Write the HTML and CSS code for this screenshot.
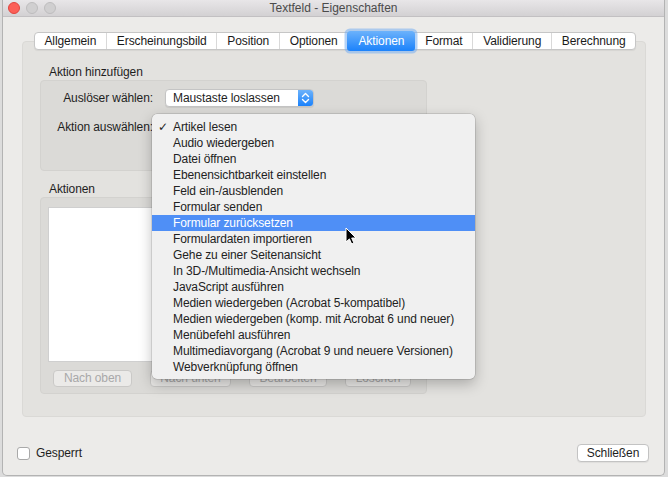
FILE: index.html
```html
<!DOCTYPE html>
<html lang="de">
<head>
<meta charset="utf-8">
<title>Textfeld - Eigenschaften</title>
<link rel="stylesheet" href="styles.css">
</head>
<body>
<div class="window">
  <div class="titlebar">
    <div class="lights"><span class="light red"></span><span class="light"></span><span class="light"></span></div>
    <div class="title">Textfeld - Eigenschaften</div>
    <div></div>
  </div>
  <div class="content">
    <div class="tabbar">
      <div class="tabs">
        <div class="tab">Allgemein</div>
        <div class="tab">Erscheinungsbild</div>
        <div class="tab">Position</div>
        <div class="tab">Optionen</div>
        <div class="tab selected">Aktionen</div>
        <div class="tab">Format</div>
        <div class="tab">Validierung</div>
        <div class="tab">Berechnung</div>
      </div>
    </div>
    <div class="panel">
      <div class="section-label">Aktion hinzufügen</div>
      <div class="group group-add">
        <div class="row">
          <div class="row-label">Auslöser wählen:</div>
          <div class="popup">
            <span class="popup-text">Maustaste loslassen</span>
            <span class="popup-arrows">
              <svg width="15" height="16" viewBox="0 0 15 16"><path d="M4.5 6.5 L7.5 3.5 L10.5 6.5 M4.5 9.5 L7.5 12.5 L10.5 9.5" fill="none" stroke="#fff" stroke-width="1.4" stroke-linecap="round" stroke-linejoin="round"/></svg>
            </span>
          </div>
        </div>
        <div class="row">
          <div class="row-label">Aktion auswählen:</div>
          <div class="menu-anchor">
            <div class="menu">
              <div class="item"><span class="check">✓</span>Artikel lesen</div>
              <div class="item"><span class="check"></span>Audio wiedergeben</div>
              <div class="item"><span class="check"></span>Datei öffnen</div>
              <div class="item"><span class="check"></span>Ebenensichtbarkeit einstellen</div>
              <div class="item"><span class="check"></span>Feld ein-/ausblenden</div>
              <div class="item"><span class="check"></span>Formular senden</div>
              <div class="item hl"><span class="check"></span>Formular zurücksetzen</div>
              <div class="item"><span class="check"></span>Formulardaten importieren</div>
              <div class="item"><span class="check"></span>Gehe zu einer Seitenansicht</div>
              <div class="item"><span class="check"></span>In 3D-/Multimedia-Ansicht wechseln</div>
              <div class="item"><span class="check"></span>JavaScript ausführen</div>
              <div class="item"><span class="check"></span>Medien wiedergeben (Acrobat 5-kompatibel)</div>
              <div class="item"><span class="check"></span>Medien wiedergeben (komp. mit Acrobat 6 und neuer)</div>
              <div class="item"><span class="check"></span>Menübefehl ausführen</div>
              <div class="item"><span class="check"></span>Multimediavorgang (Acrobat 9 und neuere Versionen)</div>
              <div class="item"><span class="check"></span>Webverknüpfung öffnen</div>
              <svg class="cursor" width="12" height="18" viewBox="0 0 12 18"><path d="M1 1 L1 15 L4.4 11.9 L6.7 17 L8.9 16 L6.7 11 L11 11 Z" fill="#000" stroke="#fff" stroke-width="1" stroke-linejoin="round"/></svg>
            </div>
          </div>
        </div>
      </div>
      <div class="section-label label-actions">Aktionen</div>
      <div class="group group-list">
        <div class="list"></div>
        <div class="buttons">
          <button class="btn btn-up" disabled>Nach oben</button>
          <button class="btn btn-down" disabled>Nach unten</button>
          <button class="btn btn-edit" disabled>Bearbeiten</button>
          <button class="btn btn-del" disabled>Löschen</button>
        </div>
      </div>
    </div>
    <div class="footer">
      <label class="check-row"><span class="checkbox"></span>Gesperrt</label>
      <button class="btn-close">Schließen</button>
    </div>
  </div>
</div>
</body>
</html>
```

FILE: styles.css
```css
* { box-sizing: border-box; }

body {
  margin: 0;
  background: #dcdcdc;
  font-family: "Liberation Sans", Arial, sans-serif;
  font-size: 12px;
  letter-spacing: -0.1px;
  color: #1e1e1e;
}

.window {
  margin-left: 2px;
  width: 663px;
  height: 476px;
  background: #ecebe9;
  border: 1px solid #b3b3b3;
  border-top: none;
  border-radius: 0 0 5px 5px;
  display: flex;
  flex-direction: column;
  overflow: hidden;
}

.titlebar {
  height: 17px;
  display: grid;
  grid-template-columns: 1fr auto 1fr;
  align-items: center;
  background: linear-gradient(#e8e6e8, #d3d1d3);
  border-bottom: 1px solid #c2c0c2;
}

.lights {
  display: flex;
  gap: 6px;
  padding-left: 5px;
  padding-bottom: 1px;
}

.light {
  width: 12px;
  height: 12px;
  border-radius: 50%;
  background: #d0cfd0;
  border: 1px solid #bebdbe;
}

.light.red {
  background: #fc5f57;
  border-color: #e0453f;
}

.title {
  font-size: 12px;
  color: #4b4b4b;
  line-height: 16px;
  letter-spacing: 0;
}

.content {
  flex: 1;
  display: flex;
  flex-direction: column;
}

.tabbar {
  display: flex;
  justify-content: center;
  margin-top: 15px;
  margin-bottom: -9px;
  padding-left: 3px;
  position: relative;
  z-index: 1;
}

.tabs {
  display: flex;
  align-items: center;
  height: 18px;
  background: #fff;
  border: 1px solid #c6c6c6;
  border-radius: 4px;
  box-shadow: 0 1px 1px rgba(0, 0, 0, 0.06);
}

.tab {
  padding: 0 9.8px;
  line-height: 16px;
  border-left: 1px solid #d9d9d9;
  color: #1a1a1a;
  white-space: nowrap;
}

.tab:first-child,
.tab.selected,
.tab.selected + .tab {
  border-left: none;
}

.tab.selected {
  height: 20px;
  line-height: 20px;
  padding: 0 11px;
  background: linear-gradient(#6cb2fb, #1b82fb);
  color: #fff;
  border-radius: 3px;
  box-shadow: 0 0 0 2.5px rgba(120, 175, 240, 0.55);
}

.panel {
  margin: 0 18px 0 19px;
  background: #e3e2df;
  border: 1px solid #dad9d6;
  border-radius: 4px;
  padding: 23px 0 22px 17px;
}

.section-label {
  line-height: 15px;
  padding-left: 9px;
  color: #1e1e1e;
}

.label-actions {
  margin-top: 11px;
}

.group {
  width: 387px;
  background: #dbdad7;
  border: 1px solid #d3d2cf;
  border-radius: 4px;
}

.group-add {
  height: 91px;
  padding-top: 8px;
  display: flex;
  flex-direction: column;
  gap: 11px;
}

.row {
  display: flex;
  align-items: center;
  height: 18px;
  gap: 12px;
}

.row-label {
  width: 112px;
  text-align: right;
  white-space: nowrap;
}

.popup {
  width: 149px;
  height: 18px;
  display: flex;
  align-items: center;
  background: #fff;
  border: 1px solid #c4c4c4;
  border-radius: 4px;
  box-shadow: 0 1px 1px rgba(0, 0, 0, 0.08);
  overflow: hidden;
}

.popup-text {
  flex: 1;
  padding-left: 7px;
  white-space: nowrap;
}

.popup-arrows {
  width: 15px;
  height: 16px;
  display: flex;
  background: linear-gradient(#6cb2fb, #1b82fb);
}

.menu-anchor {
  position: relative;
  width: 149px;
  height: 18px;
}

.menu {
  position: absolute;
  left: -13px;
  top: -4px;
  width: 323px;
  padding: 5px 0 4px;
  background: #f0f0f0;
  border-radius: 5px;
  box-shadow: 0 5px 14px rgba(0, 0, 0, 0.25), 0 0 0 0.5px rgba(0, 0, 0, 0.2);
  z-index: 5;
}

.item {
  display: flex;
  line-height: 16px;
  height: 16px;
  padding-left: 6px;
  color: #222;
  white-space: nowrap;
}

.item.hl {
  background: #4f8ff6;
  color: #fff;
}

.check {
  width: 15px;
  flex: none;
  font-family: "DejaVu Sans", sans-serif;
  font-size: 12px;
}

.cursor {
  position: absolute;
  left: 193px;
  top: 113px;
}

.group-list {
  height: 197px;
  padding: 9px 7px 6px 7px;
}

.list {
  height: 155px;
  background: #fff;
  border: 1px solid #cfcfcf;
}

.buttons {
  display: flex;
  gap: 18px;
  margin-top: 8px;
  padding-left: 5px;
}

.btn {
  flex: none;
  white-space: nowrap;
  height: 17px;
  padding: 0;
  font-family: inherit;
  font-size: 12px;
  letter-spacing: -0.1px;
  color: #a8a8a8;
  background: #ebeae8;
  border: 1px solid #cac9c7;
  border-radius: 4px;
  line-height: 15px;
}

.btn-up { width: 79px; }
.btn-down { width: 81px; }
.btn-edit { width: 78px; }
.btn-del { width: 66px; }

.footer {
  margin-top: 27px;
  height: 18px;
  display: flex;
  justify-content: space-between;
  align-items: center;
  padding: 0 15px 0 14px;
}

.check-row {
  display: flex;
  align-items: center;
  gap: 6px;
}

.checkbox {
  width: 13px;
  height: 13px;
  background: #fff;
  border: 1px solid #a9a9a9;
  border-radius: 3px;
}

.btn-close {
  height: 18px;
  width: 72px;
  padding: 0;
  font-family: inherit;
  font-size: 12px;
  letter-spacing: -0.1px;
  color: #1e1e1e;
  background: #fff;
  border: 1px solid #c3c3c3;
  border-radius: 4px;
  box-shadow: 0 1px 1px rgba(0, 0, 0, 0.06);
}
```
